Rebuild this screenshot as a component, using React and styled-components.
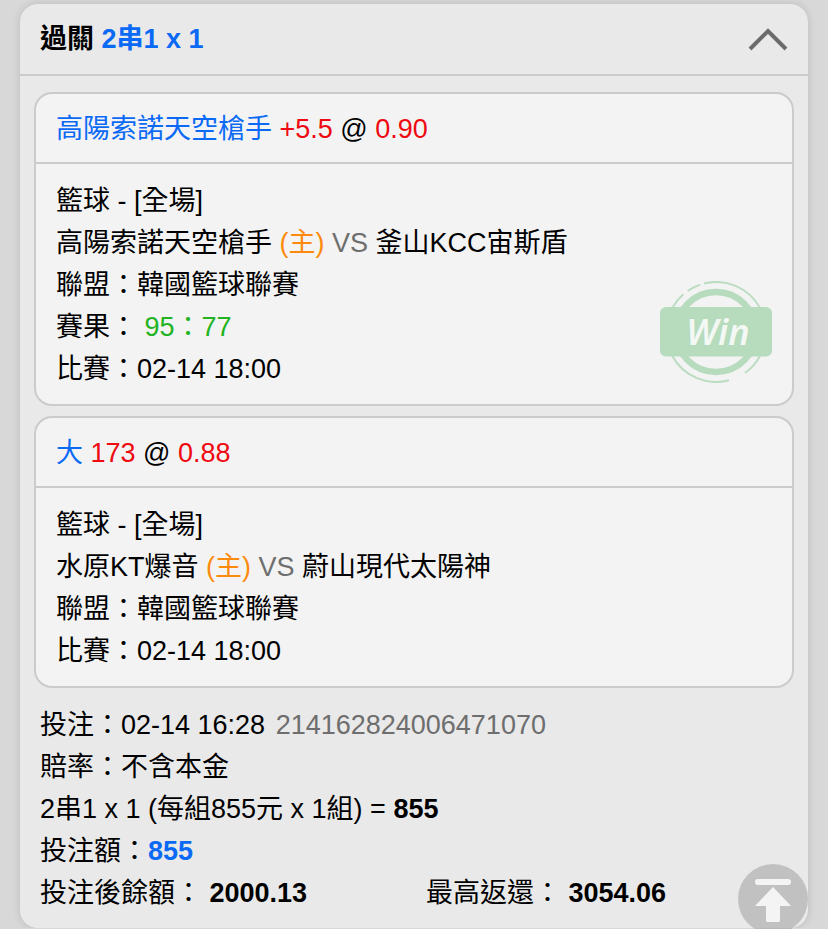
import React, { useState } from 'react';
import styled, { createGlobalStyle } from 'styled-components';

const GlobalStyle = createGlobalStyle`
  * {
    box-sizing: border-box;
  }
  body {
    margin: 0;
    background: #d8d8d8;
    color: #000000;
    font-family: 'Liberation Sans', 'Noto Sans CJK TC', sans-serif;
    font-size: 27px;
    line-height: 42px;
  }
`;

const colors = {
  blue: '#0a6af5',
  red: '#ee0a10',
  green: '#22b322',
  orange: '#fd8a0c',
  gray: '#6e6e6e',
};

const Page = styled.main`
  padding: 4px 20px 0;
`;
const Ticket = styled.section`
  background: #e9e9e9;
  border-radius: 18px;
  box-shadow: 0 0 8px rgba(0, 0, 0, 0.14);
`;
const TicketHeader = styled.header`
  display: flex;
  align-items: center;
  justify-content: space-between;
  padding: 14px 20px;
  border-bottom: 2px solid #cbcbcb;
`;
const TicketTitle = styled.h1`
  margin: 0;
  font-size: 27px;
  font-weight: 700;
`;
const ToggleButton = styled.button`
  display: flex;
  padding: 0;
  border: 0;
  background: none;
  cursor: pointer;

  svg {
    transform: ${({ $open }) => ($open ? 'none' : 'rotate(180deg)')};
  }
`;
const CardList = styled.div`
  display: flex;
  flex-direction: column;
  gap: 10px;
  padding: 16px 14px 0;
`;
const Card = styled.article`
  position: relative;
  background: #f3f3f3;
  border: 2px solid #cbcbcb;
  border-radius: 18px;
`;
const CardHeader = styled.h2`
  margin: 0;
  padding: 14px 20px 12px;
  border-bottom: 2px solid #cbcbcb;
  font-size: 27px;
  font-weight: 400;
`;
const CardBody = styled.div`
  padding: 16px 20px 14px;
`;
const Line = styled.p`
  margin: 0;
`;
const Text = styled.span`
  color: ${({ $color }) => colors[$color]};
`;
const TicketNumber = styled(Text)`
  margin-left: 3px;
`;
const Stamp = styled.svg`
  position: absolute;
  right: 20px;
  bottom: 21px;
  font-family: 'Noto Sans', sans-serif;
  font-size: 36px;
  font-style: italic;
  font-weight: 600;
`;
const Summary = styled.footer`
  padding: 16px 20px 14px;
`;
const Totals = styled.div`
  display: grid;
  grid-template-columns: 1fr 1fr;
  column-gap: 24px;
`;
const TopButton = styled.button`
  position: fixed;
  right: 20px;
  bottom: -5px;
  display: flex;
  width: 70px;
  height: 70px;
  padding: 0;
  border: 0;
  border-radius: 50%;
  background: rgba(150, 150, 150, 0.48);
  cursor: pointer;
`;

const bets = [
  {
    pick: '高陽索諾天空槍手',
    line: '+5.5',
    odds: '0.90',
    home: '高陽索諾天空槍手',
    away: '釜山KCC宙斯盾',
    score: '95：77',
    win: true,
  },
  {
    pick: '大',
    line: '173',
    odds: '0.88',
    home: '水原KT爆音',
    away: '蔚山現代太陽神',
  },
];

const WinStamp = () => (
  <Stamp width='112' height='102' viewBox='0 0 112 102'>
    <g fill='none' stroke='#bcdcc3' strokeWidth='2'>
      <path d='M44 2.5A50 50 0 0 1 100 27' />
      <path d='M100 75A50 50 0 0 1 85 92' />
      <path d='M69 99.3A50 50 0 0 1 12.3 75' />
      <path d='M12.3 27A50 50 0 0 1 23.3 13.3' />
      <path d='M27.7 10A50 50 0 0 1 40 3.6' />
    </g>
    <circle
      cx='56'
      cy='51'
      r='40'
      fill='none'
      stroke='#b6dbbd'
      strokeWidth='6.5'
    />
    <rect y='26' width='112' height='49.5' rx='6' fill='#b6dbbd' />
    <text x='58' y='64' textAnchor='middle' fill='#f3f8f4'>
      Win
    </text>
  </Stamp>
);

const BetCard = ({ bet }) => (
  <Card>
    <CardHeader>
      <Text $color='blue'>{bet.pick}</Text> <Text $color='red'>{bet.line}</Text>{' '}
      @ <Text $color='red'>{bet.odds}</Text>
    </CardHeader>
    <CardBody>
      <Line>籃球 - [全場]</Line>
      <Line>
        {bet.home} <Text $color='orange'>(主)</Text>{' '}
        <Text $color='gray'>VS</Text> {bet.away}
      </Line>
      <Line>聯盟：韓國籃球聯賽</Line>
      {bet.score && (
        <Line>
          賽果： <Text $color='green'>{bet.score}</Text>
        </Line>
      )}
      <Line>比賽：02-14 18:00</Line>
    </CardBody>
    {bet.win && <WinStamp />}
  </Card>
);

function App() {
  const [open, setOpen] = useState(true);

  return (
    <>
      <GlobalStyle />
      <Page lang='zh-Hant'>
        <Ticket>
          <TicketHeader>
            <TicketTitle>
              過關 <Text $color='blue'>2串1 x 1</Text>
            </TicketTitle>
            <ToggleButton
              type='button'
              aria-expanded={open}
              $open={open}
              onClick={() => setOpen(!open)}
            >
              <svg width='40' height='24' viewBox='0 0 40 24'>
                <path
                  d='M2 22L20 4L38 22'
                  fill='none'
                  stroke='#6b6b6b'
                  strokeWidth='4'
                />
              </svg>
            </ToggleButton>
          </TicketHeader>
          {open && (
            <CardList>
              {bets.map((bet) => (
                <BetCard key={bet.pick} bet={bet} />
              ))}
            </CardList>
          )}
          <Summary>
            <Line>
              投注：02-14 16:28{' '}
              <TicketNumber $color='gray'>214162824006471070</TicketNumber>
            </Line>
            <Line>賠率：不含本金</Line>
            <Line>
              2串1 x 1 (每組855元 x 1組) = <b>855</b>
            </Line>
            <Line>
              投注額：
              <Text as='b' $color='blue'>
                855
              </Text>
            </Line>
            <Totals>
              <Line>
                投注後餘額： <b>2000.13</b>
              </Line>
              <Line>
                最高返還： <b>3054.06</b>
              </Line>
            </Totals>
          </Summary>
        </Ticket>
      </Page>
      <TopButton type='button' onClick={() => window.scrollTo(0, 0)}>
        <svg width='70' height='70' viewBox='0 0 70 70' fill='#f4f4f4'>
          <rect x='17' y='15' width='36' height='6' rx='3' />
          <path d='M35 23L53 42H42V56.5Q42 58 40.5 58H29.5Q28 58 28 56.5V42H17Z' />
        </svg>
      </TopButton>
    </>
  );
}

export default App;
